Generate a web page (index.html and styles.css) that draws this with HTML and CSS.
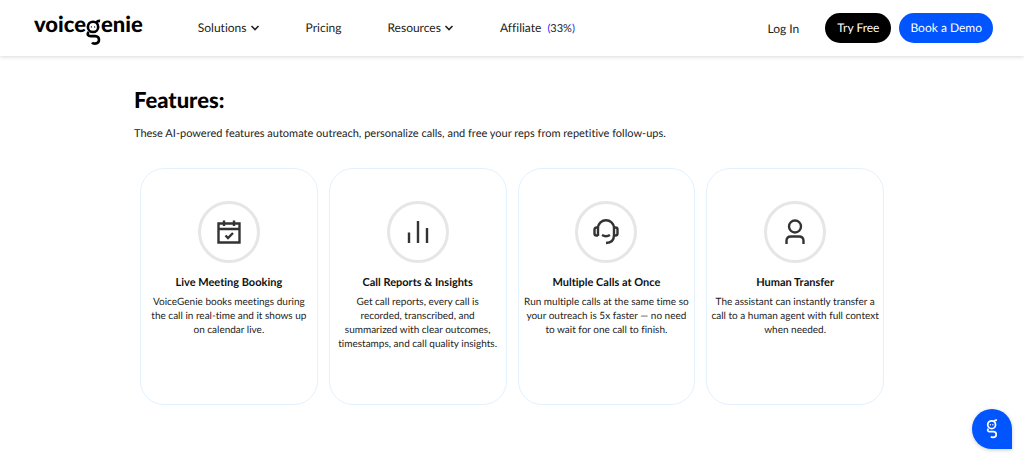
FILE: index.html
```html
<!DOCTYPE html>
<html lang="en">
<head>
    <meta charset="UTF-8">
    <meta name="viewport" content="width=device-width, initial-scale=1.0">
    <link rel="stylesheet" href="styles.css">
    <title>VoiceGenie</title>
</head>
<body>
    <header class="header">
        <a class="logo" href="#" aria-label="voicegenie">
            <span>voice</span>
            <svg class="logoMark" viewBox="0 0 16 28" fill="none" stroke="currentColor" stroke-width="2.8">
                <circle cx="7.5" cy="8" r="5.5"/>
                <path d="M11 3.2C12 2 13 1.4 15 1.6"/>
                <path d="M3 13.5C0.5 16 2.5 17.8 5 17.8H10C15 17.8 15.5 25.8 9.5 25.8C8 25.8 7 25.4 6.5 24.6"/>
                <circle cx="5.8" cy="8" r="0.7" fill="currentColor" stroke="none"/>
                <circle cx="9.2" cy="8" r="0.7" fill="currentColor" stroke="none"/>
            </svg>
            <span>enie</span>
        </a>
        <nav class="nav">
            <a href="#">Solutions <svg class="chevron" viewBox="0 0 10 8"><path d="M1.5 2L5 5.5L8.5 2"/></svg></a>
            <a href="#">Pricing</a>
            <a href="#">Resources <svg class="chevron" viewBox="0 0 10 8"><path d="M1.5 2L5 5.5L8.5 2"/></svg></a>
            <a href="#">Affiliate <span class="percent">(<b>33%</b>)</span></a>
        </nav>
        <div class="actions">
            <a class="login" href="#">Log In</a>
            <a class="btn black" href="#">Try Free</a>
            <a class="btn blue" href="#">Book a Demo</a>
        </div>
    </header>
    <main class="features">
        <h1>Features:</h1>
        <p class="intro">These AI-powered features automate outreach, personalize calls, and free your reps from repetitive follow-ups.</p>
        <div class="cards">
            <article class="card">
                <div class="circle">
                    <svg class="icon" viewBox="0 0 28 28">
                        <path d="M3.5 5.5H24.5V24.5H3.5ZM3.5 11H24.5M9 2.5V8M19 2.5V8M10.5 17.5L13 20L18 15"/>
                    </svg>
                </div>
                <h2>Live Meeting Booking</h2>
                <p>VoiceGenie books meetings during<br>the call in real-time and it shows up<br>on calendar live.</p>
            </article>
            <article class="card">
                <div class="circle">
                    <svg class="icon" viewBox="0 0 28 28">
                        <path d="M5 14.5V25M14 3V25M23 10V25"/>
                    </svg>
                </div>
                <h2>Call Reports &amp; Insights</h2>
                <p>Get call reports, every call is<br>recorded, transcribed, and<br>summarized with clear outcomes,<br>timestamps, and call quality insights.</p>
            </article>
            <article class="card">
                <div class="circle">
                    <svg class="icon" viewBox="0 0 28 28">
                        <path d="M6 18V10.5C6 -0.5 22 -0.5 22 10.5V17C22 22 19 25 14 25"/>
                        <path d="M6 9.5H4.5Q2.5 9.5 2.5 11.5V15.5Q2.5 17.5 4.5 17.5H6M22 9.5H23.5Q25.5 9.5 25.5 11.5V15.5Q25.5 17.5 23.5 17.5H22"/>
                        <path d="M10 17Q14 19.5 18 17"/>
                    </svg>
                </div>
                <h2>Multiple Calls at Once</h2>
                <p>Run multiple calls at the same time so<br>your outreach is 5x faster — no need<br>to wait for one call to finish.</p>
            </article>
            <article class="card">
                <div class="circle">
                    <svg class="icon" viewBox="0 0 28 28">
                        <circle cx="14" cy="8.5" r="6"/>
                        <path d="M5.5 26V23Q5.5 18.5 10 18.5H18Q22.5 18.5 22.5 23V26"/>
                    </svg>
                </div>
                <h2>Human Transfer</h2>
                <p>The assistant can instantly transfer a<br>call to a human agent with full context<br>when needed.</p>
            </article>
        </div>
    </main>
    <button class="chat" type="button" aria-label="Open chat">
        <svg class="chatMark" viewBox="0 0 16 28" fill="none" stroke="currentColor" stroke-width="2.4">
            <circle cx="7.5" cy="8" r="5.5"/>
            <path d="M11 3.2C12 2 13 1.4 15 1.6"/>
            <path d="M3 13.5C0.5 16 2.5 17.8 5 17.8H10C15 17.8 15.5 25.8 9.5 25.8C8 25.8 7 25.4 6.5 24.6"/>
            <circle cx="5.8" cy="8" r="1" fill="currentColor" stroke="none"/>
            <circle cx="9.2" cy="8" r="1" fill="currentColor" stroke="none"/>
        </svg>
    </button>
</body>
</html>
```
FILE: styles.css
```css
*{box-sizing:border-box}
body{margin:0;background-color:#fff;color:#222;font-family:Lato,"Open Sans",sans-serif;font-variant-ligatures:none;text-rendering:geometricPrecision}
a{color:inherit;text-decoration:none}
.header{display:flex;align-items:center;height:56px;padding:0 31px 0 34px;box-shadow:0 1px 4px rgba(0,0,0,.15)}
.logo{display:flex;align-items:flex-start;color:#000;font-size:22px;font-weight:900;line-height:28px}
.logoMark{width:15px;height:27px;margin-top:9px}
.nav{display:flex;flex:1;gap:46px;margin-left:55px;font-size:12px;line-height:20px}
.chevron{width:10px;height:8px;fill:none;stroke:#222;stroke-width:1.6}
.percent{margin-left:3px;font-size:11px;color:#22f}
.percent b{font-weight:400;color:#223}
.actions{display:flex;align-items:center;gap:8px;font-size:12px}
.login{margin-right:18px}
.btn{padding:0 11px;border-radius:15px;line-height:30px;color:#fff}
.black{padding:0 12px;background-color:#000}
.blue{background-color:#0055ff}
.features{max-width:756px;margin:0 auto;padding:30px 0 54px}
h1{margin:0;color:#000;font-size:22px;font-weight:900;line-height:28px}
.intro{margin:10px 0 24px;font-size:11px;line-height:20px}
.cards{display:grid;grid-template-columns:repeat(4,1fr);gap:11px;padding:0 6px}
.card{min-height:237px;padding:32px 4px;border:1px solid #e3f1fd;border-radius:24px;text-align:center}
.circle{display:flex;align-items:center;justify-content:center;width:62px;height:62px;margin:0 auto;border:3px solid #e6e6e6;border-radius:50%}
.icon{width:28px;height:28px;fill:none;stroke:#333;stroke-width:2.4}
h2{margin:12px 0 4px;color:#111;font-size:11px;font-weight:700;line-height:16px}
.card p{margin:0;font-size:10px;line-height:14px}
.chat{position:fixed;right:12px;bottom:9px;display:flex;align-items:center;justify-content:center;width:40px;height:40px;padding:0;border:none;border-radius:20px 20px 0 20px;background-color:#0055ff;color:#fff;box-shadow:0 1px 4px rgba(0,0,0,.2);cursor:pointer}
.chatMark{width:12px;height:20px}
```
